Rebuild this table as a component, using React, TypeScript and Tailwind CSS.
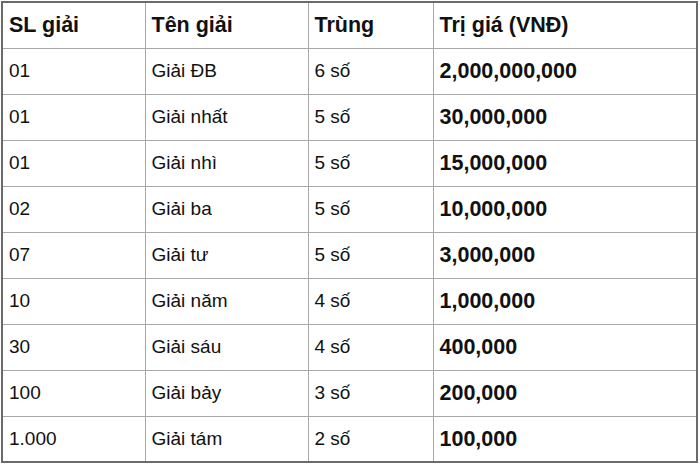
const rows: [string, string, string, string][] = [
  ["01", "Giải ĐB", "6 số", "2,000,000,000"],
  ["01", "Giải nhất", "5 số", "30,000,000"],
  ["01", "Giải nhì", "5 số", "15,000,000"],
  ["02", "Giải ba", "5 số", "10,000,000"],
  ["07", "Giải tư", "5 số", "3,000,000"],
  ["10", "Giải năm", "4 số", "1,000,000"],
  ["30", "Giải sáu", "4 số", "400,000"],
  ["100", "Giải bảy", "3 số", "200,000"],
  ["1.000", "Giải tám", "2 số", "100,000"],
];

const headers = ["SL giải", "Tên giải", "Trùng", "Trị giá (VNĐ)"];

export default function App() {
  return (
    <div className="w-[700px] h-[466px] bg-white pt-[1px] pl-[1px]" style={{ fontFamily: '"Liberation Sans", Arial, sans-serif' }}>
      <table className="table-fixed border-collapse border-2 border-[#6a6a6a] w-[697px] text-[#111]">
        <colgroup>
          <col className="w-[143px]" />
          <col className="w-[163px]" />
          <col className="w-[125px]" />
          <col />
        </colgroup>
        <thead>
          <tr className="h-[46px]">
            {headers.map((h) => (
              <th key={h} className="border border-[#a8a8a8] px-[6px] text-left align-middle text-[21.5px] font-bold">
                {h}
              </th>
            ))}
          </tr>
        </thead>
        <tbody>
          {rows.map((r, i) => (
            <tr key={i} className="h-[46px]">
              <td className="border border-[#a8a8a8] px-[6px] align-middle text-[19px]">{r[0]}</td>
              <td className="border border-[#a8a8a8] px-[6px] align-middle text-[19px]">{r[1]}</td>
              <td className="border border-[#a8a8a8] px-[6px] align-middle text-[19px]">{r[2]}</td>
              <td className="border border-[#a8a8a8] px-[6px] align-middle text-[21.5px] font-bold">{r[3]}</td>
            </tr>
          ))}
        </tbody>
      </table>
    </div>
  );
}
